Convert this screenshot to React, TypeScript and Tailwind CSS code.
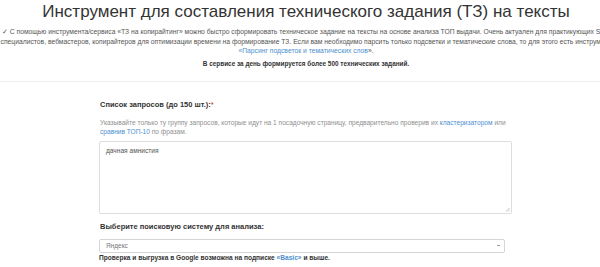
import React from "react";

const link = "text-[#4d8fd0]";

export default function App() {
  return (
    <div className="w-[600px] h-[267px] overflow-hidden bg-white font-['Liberation_Sans',Arial,sans-serif] text-[#333]">
      <div className="w-[612px] text-center whitespace-nowrap">
        <h1 className="pt-[2px] text-[17px] leading-[20px] font-normal text-[#333]">
          Инструмент для составления технического задания (ТЗ) на тексты
        </h1>
        <p className="mt-[5px] text-[6.75px] leading-[9.7px] text-[#555]">
          ✓ С помощью инструмента/сервиса «ТЗ на копирайтинг» можно быстро сформировать техническое задание на тексты на основе анализа ТОП выдачи. Очень актуален для практикующих SEO
          <br />
          специалистов, вебмастеров, копирайтеров для оптимизации времени на формирование ТЗ. Если вам необходимо парсить только подсветки и тематические слова, то для этого есть инструмент
          <br />
          <span className={link}>«Парсинг подсветок и тематических слов</span>».
        </p>
        <p className="mt-[3px] text-[6.4px] leading-[9.5px] font-bold text-[#333]">
          В сервисе за день формируется более 500 технических заданий.
        </p>
      </div>
      <div className="mt-[12px] border-t border-[#eeeeee]" />
      <div className="ml-[99px] w-[413px] pt-[18px]">
        <div className="pl-[1px] text-[7.5px] leading-[10px] font-bold text-[#333]">
          Список запросов (до 150 шт.):<span className="text-[#d9534f]">*</span>
        </div>
        <p className="mt-[8px] pl-[1px] whitespace-nowrap text-[6.6px] leading-[9.5px] text-[#8f8f8f]">
          Указывайте только ту группу запросов, которые идут на 1 посадочную страницу, предварительно проверив их{" "}
          <span className={link}>кластеризатором</span> или
          <br />
          <span className={link}>сравнив ТОП-10</span> по фразам.
        </p>
        <div className="mt-[4px] relative h-[73px] w-[413px] rounded-[2px] border border-[#dddddd] bg-white pl-[6px] pt-[4px]">
          <div className="text-[6.6px] leading-[9px] text-[#555]">дачная амнистия</div>
          <svg className="absolute right-[1px] bottom-[1px]" width="5" height="5" viewBox="0 0 5 5">
            <path d="M1 4.5 L4.5 1 M3 4.5 L4.5 3" stroke="#aaa" strokeWidth="0.7" />
          </svg>
        </div>
        <div className="mt-[8px] pl-[1px] text-[7.5px] leading-[10px] font-bold text-[#333]">
          Выберите поисковую систему для анализа:
        </div>
        <div className="mt-[7px] flex h-[14px] w-[406px] items-center justify-between rounded-[2px] border border-[#d5d5d5] bg-white pl-[6px] pr-[4px]">
          <span className="text-[6.5px] leading-[9px] text-[#777]">Яндекс</span>
          <span className="h-[1.5px] w-[3px] bg-[#999]" />
        </div>
        <div className="whitespace-nowrap text-[6.6px] leading-[9px] font-bold text-[#333]">
          Проверка и выгрузка в Google возможна на подписке <span className={link}>«Basic»</span> и выше.
        </div>
      </div>
    </div>
  );
}
